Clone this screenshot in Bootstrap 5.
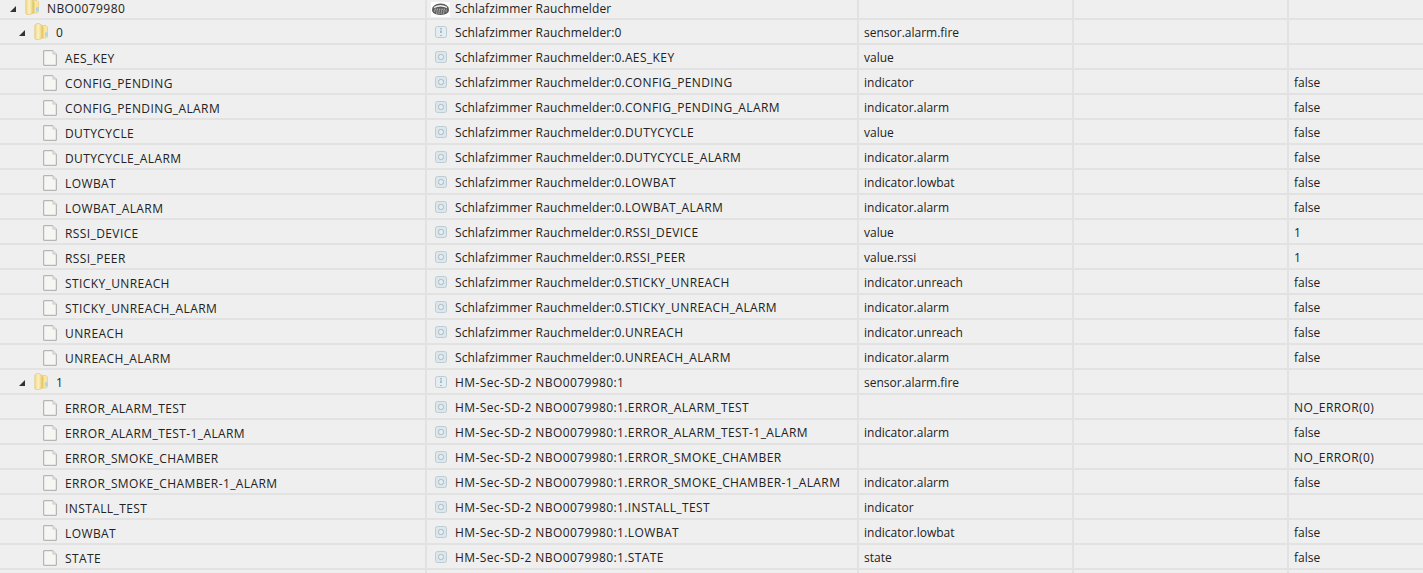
<!DOCTYPE html>
<html lang="de"><head><meta charset="utf-8"><title>Objekte</title>
<link href="https://cdn.jsdelivr.net/npm/bootstrap@5.3.0/dist/css/bootstrap.min.css" rel="stylesheet">
<style>
html,body{background:#efefef;overflow:hidden}
body{font-family:"Open Sans","Noto Sans","Liberation Sans",sans-serif;font-size:12px;color:#222;line-height:18px}
.tree-row{display:grid;grid-template-columns:427px 432px 215px 215px 1fr;height:25px;border-bottom:2px solid #e2e2e2;white-space:nowrap}
.tree-row>div{border-right:2px solid #e2e2e2;display:flex;align-items:center;min-width:0;padding-top:3px}
.tree-row>div:last-child{border-right:0}
.tree-row>.c-name.l2{padding-top:5px}
.tree-row.first{height:20px;line-height:14px}
.tree-row.first>div{padding-top:0}
.c-name{letter-spacing:.4px}
.c-name.l0{padding-left:10px}.c-name.l1{padding-left:19px}.c-name.l2{padding-left:43px}
.c-id{padding-left:7px;letter-spacing:.12px}.c-txt{padding-left:5px}
.caps{letter-spacing:.4px;white-space:pre}
.arrow{width:0;height:0;border-style:solid;border-width:0 0 6px 6px;border-color:transparent transparent #333 transparent;margin-right:9px;flex:none}
.ic-f{width:14px;height:17px;margin-top:-3px;margin-right:8px;flex:none}
.first .ic-f{margin-top:-5px}
.ic-d{width:14px;height:16px;margin-top:-3px;margin-right:8px;flex:none}
.ic-o{width:12px;height:12px;margin:-2px 8px 0 1px;flex:none}
.ic-p{width:19px;height:15px;margin-left:-3px;margin-right:5px;flex:none}
</style></head><body>
<svg width="0" height="0" class="d-block position-absolute"><defs>
<linearGradient id="fg" x1="0" x2="1" y1="0" y2="0"><stop offset="0" stop-color="#f1d98c"/><stop offset=".5" stop-color="#fbf0bf"/><stop offset="1" stop-color="#ecd07a"/></linearGradient>
<symbol id="folder" viewBox="0 0 14 17"><path d="M6.500 2.500h5.500l1.500 1.500v10l-1.500 1h-5.500z" fill="#f8e6a2" stroke="#dfc679" stroke-width=".6"/><path d="M.8 2 2.500.6h3L8 2.500V15.500L4.500 16.500H2L.8 15.500z" fill="url(#fg)" stroke="#dcc272" stroke-width=".6"/><path d="M8 3.500h1.500V15H8z" fill="#e8c766"/><path d="M11 9.500l2.500-.5v4L11 13.500z" fill="#a9d4ee"/></symbol>
<symbol id="file" viewBox="0 0 14 16"><path d="M.7.7h9.200l3.400 3.400v11.200H.7z" fill="#f6f6f3" stroke="#a8a8a8" stroke-width="1"/><path d="M9.900.7v3.400h3.400" fill="#e4e4e4" stroke="#c4c4c4" stroke-width=".8"/></symbol>
<symbol id="state" viewBox="0 0 12 12"><rect x=".5" y=".5" width="11" height="11" rx="2" fill="#dde6ea" stroke="#bccdd5"/><rect x="3.500" y="3.500" width="5" height="5" rx="2.200" fill="#e8eef0" stroke="#a4b9c3"/></symbol>
<symbol id="chan" viewBox="0 0 12 12"><rect x=".5" y=".5" width="11" height="11" rx="2" fill="#e6edf0" stroke="#b9cdd6"/><path d="M6 2v1.500M6 4.500v2.500M6 9v1" stroke="#7c9dad" stroke-width="1.200"/></symbol>
<symbol id="smoke" viewBox="0 0 19 15"><rect width="19" height="15" fill="#fff"/><path d="M1 8Q1 2 9.500 1.500 18 2 18 8q0 4.500-8.500 5Q1 12.500 1 8z" fill="#5a5a5a"/><path d="M3 5.500Q9.500 2 16 5.500" stroke="#f2f2f2" fill="none" stroke-width="1.400"/><path d="M3 9h13M5 11h9M3.500 7.200h12" stroke="#e2e2e2" stroke-width=".9" stroke-dasharray="1.300 1"/></symbol>
</defs></svg>
<main>
<div class="tree-row first"><div class="c-name l0"><span class="arrow"></span><svg class="ic-f"><use href="#folder"/></svg>NBO0079980</div><div class="c-id"><svg class="ic-p"><use href="#smoke"/></svg>Schlafzimmer Rauchmelder</div><div class="c-txt"></div><div></div><div></div></div>
<div class="tree-row"><div class="c-name l1"><span class="arrow"></span><svg class="ic-f"><use href="#folder"/></svg>0</div><div class="c-id"><svg class="ic-o"><use href="#chan"/></svg>Schlafzimmer Rauchmelder:0</div><div class="c-txt">sensor.alarm.fire</div><div></div><div></div></div>
<div class="tree-row"><div class="c-name l2"><svg class="ic-d"><use href="#file"/></svg>AES_KEY</div><div class="c-id"><svg class="ic-o"><use href="#state"/></svg><span>Schlafzimmer Rauchmelder:0.<span class="caps">AES_KEY</span></span></div><div class="c-txt">value</div><div></div><div></div></div>
<div class="tree-row"><div class="c-name l2"><svg class="ic-d"><use href="#file"/></svg>CONFIG_PENDING</div><div class="c-id"><svg class="ic-o"><use href="#state"/></svg><span>Schlafzimmer Rauchmelder:0.<span class="caps">CONFIG_PENDING</span></span></div><div class="c-txt">indicator</div><div></div><div class="c-txt">false</div></div>
<div class="tree-row"><div class="c-name l2"><svg class="ic-d"><use href="#file"/></svg>CONFIG_PENDING_ALARM</div><div class="c-id"><svg class="ic-o"><use href="#state"/></svg><span>Schlafzimmer Rauchmelder:0.<span class="caps">CONFIG_PENDING_ALARM</span></span></div><div class="c-txt">indicator.alarm</div><div></div><div class="c-txt">false</div></div>
<div class="tree-row"><div class="c-name l2"><svg class="ic-d"><use href="#file"/></svg>DUTYCYCLE</div><div class="c-id"><svg class="ic-o"><use href="#state"/></svg><span>Schlafzimmer Rauchmelder:0.<span class="caps">DUTYCYCLE</span></span></div><div class="c-txt">value</div><div></div><div class="c-txt">false</div></div>
<div class="tree-row"><div class="c-name l2"><svg class="ic-d"><use href="#file"/></svg>DUTYCYCLE_ALARM</div><div class="c-id"><svg class="ic-o"><use href="#state"/></svg><span>Schlafzimmer Rauchmelder:0.<span class="caps">DUTYCYCLE_ALARM</span></span></div><div class="c-txt">indicator.alarm</div><div></div><div class="c-txt">false</div></div>
<div class="tree-row"><div class="c-name l2"><svg class="ic-d"><use href="#file"/></svg>LOWBAT</div><div class="c-id"><svg class="ic-o"><use href="#state"/></svg><span>Schlafzimmer Rauchmelder:0.<span class="caps">LOWBAT</span></span></div><div class="c-txt">indicator.lowbat</div><div></div><div class="c-txt">false</div></div>
<div class="tree-row"><div class="c-name l2"><svg class="ic-d"><use href="#file"/></svg>LOWBAT_ALARM</div><div class="c-id"><svg class="ic-o"><use href="#state"/></svg><span>Schlafzimmer Rauchmelder:0.<span class="caps">LOWBAT_ALARM</span></span></div><div class="c-txt">indicator.alarm</div><div></div><div class="c-txt">false</div></div>
<div class="tree-row"><div class="c-name l2"><svg class="ic-d"><use href="#file"/></svg>RSSI_DEVICE</div><div class="c-id"><svg class="ic-o"><use href="#state"/></svg><span>Schlafzimmer Rauchmelder:0.<span class="caps">RSSI_DEVICE</span></span></div><div class="c-txt">value</div><div></div><div class="c-txt">1</div></div>
<div class="tree-row"><div class="c-name l2"><svg class="ic-d"><use href="#file"/></svg>RSSI_PEER</div><div class="c-id"><svg class="ic-o"><use href="#state"/></svg><span>Schlafzimmer Rauchmelder:0.<span class="caps">RSSI_PEER</span></span></div><div class="c-txt">value.rssi</div><div></div><div class="c-txt">1</div></div>
<div class="tree-row"><div class="c-name l2"><svg class="ic-d"><use href="#file"/></svg>STICKY_UNREACH</div><div class="c-id"><svg class="ic-o"><use href="#state"/></svg><span>Schlafzimmer Rauchmelder:0.<span class="caps">STICKY_UNREACH</span></span></div><div class="c-txt">indicator.unreach</div><div></div><div class="c-txt">false</div></div>
<div class="tree-row"><div class="c-name l2"><svg class="ic-d"><use href="#file"/></svg>STICKY_UNREACH_ALARM</div><div class="c-id"><svg class="ic-o"><use href="#state"/></svg><span>Schlafzimmer Rauchmelder:0.<span class="caps">STICKY_UNREACH_ALARM</span></span></div><div class="c-txt">indicator.alarm</div><div></div><div class="c-txt">false</div></div>
<div class="tree-row"><div class="c-name l2"><svg class="ic-d"><use href="#file"/></svg>UNREACH</div><div class="c-id"><svg class="ic-o"><use href="#state"/></svg><span>Schlafzimmer Rauchmelder:0.<span class="caps">UNREACH</span></span></div><div class="c-txt">indicator.unreach</div><div></div><div class="c-txt">false</div></div>
<div class="tree-row"><div class="c-name l2"><svg class="ic-d"><use href="#file"/></svg>UNREACH_ALARM</div><div class="c-id"><svg class="ic-o"><use href="#state"/></svg><span>Schlafzimmer Rauchmelder:0.<span class="caps">UNREACH_ALARM</span></span></div><div class="c-txt">indicator.alarm</div><div></div><div class="c-txt">false</div></div>
<div class="tree-row"><div class="c-name l1"><span class="arrow"></span><svg class="ic-f"><use href="#folder"/></svg>1</div><div class="c-id"><svg class="ic-o"><use href="#chan"/></svg><span class="caps">HM-Sec-SD-2 NBO0079980:1</span></div><div class="c-txt">sensor.alarm.fire</div><div></div><div></div></div>
<div class="tree-row"><div class="c-name l2"><svg class="ic-d"><use href="#file"/></svg>ERROR_ALARM_TEST</div><div class="c-id"><svg class="ic-o"><use href="#state"/></svg><span class="caps">HM-Sec-SD-2 NBO0079980:1.ERROR_ALARM_TEST</span></div><div class="c-txt"></div><div></div><div class="c-txt"><span class="caps">NO_ERROR(0)</span></div></div>
<div class="tree-row"><div class="c-name l2"><svg class="ic-d"><use href="#file"/></svg>ERROR_ALARM_TEST-1_ALARM</div><div class="c-id"><svg class="ic-o"><use href="#state"/></svg><span class="caps">HM-Sec-SD-2 NBO0079980:1.ERROR_ALARM_TEST-1_ALARM</span></div><div class="c-txt">indicator.alarm</div><div></div><div class="c-txt">false</div></div>
<div class="tree-row"><div class="c-name l2"><svg class="ic-d"><use href="#file"/></svg>ERROR_SMOKE_CHAMBER</div><div class="c-id"><svg class="ic-o"><use href="#state"/></svg><span class="caps">HM-Sec-SD-2 NBO0079980:1.ERROR_SMOKE_CHAMBER</span></div><div class="c-txt"></div><div></div><div class="c-txt"><span class="caps">NO_ERROR(0)</span></div></div>
<div class="tree-row"><div class="c-name l2"><svg class="ic-d"><use href="#file"/></svg>ERROR_SMOKE_CHAMBER-1_ALARM</div><div class="c-id"><svg class="ic-o"><use href="#state"/></svg><span class="caps">HM-Sec-SD-2 NBO0079980:1.ERROR_SMOKE_CHAMBER-1_ALARM</span></div><div class="c-txt">indicator.alarm</div><div></div><div class="c-txt">false</div></div>
<div class="tree-row"><div class="c-name l2"><svg class="ic-d"><use href="#file"/></svg>INSTALL_TEST</div><div class="c-id"><svg class="ic-o"><use href="#state"/></svg><span class="caps">HM-Sec-SD-2 NBO0079980:1.INSTALL_TEST</span></div><div class="c-txt">indicator</div><div></div><div></div></div>
<div class="tree-row"><div class="c-name l2"><svg class="ic-d"><use href="#file"/></svg>LOWBAT</div><div class="c-id"><svg class="ic-o"><use href="#state"/></svg><span class="caps">HM-Sec-SD-2 NBO0079980:1.LOWBAT</span></div><div class="c-txt">indicator.lowbat</div><div></div><div class="c-txt">false</div></div>
<div class="tree-row"><div class="c-name l2"><svg class="ic-d"><use href="#file"/></svg>STATE</div><div class="c-id"><svg class="ic-o"><use href="#state"/></svg><span class="caps">HM-Sec-SD-2 NBO0079980:1.STATE</span></div><div class="c-txt">state</div><div></div><div class="c-txt">false</div></div>
<div class="tree-row"><div></div><div></div><div></div><div></div><div></div></div>
</main>
<script src="https://cdn.jsdelivr.net/npm/bootstrap@5.3.0/dist/js/bootstrap.bundle.min.js"></script>
</body></html>
